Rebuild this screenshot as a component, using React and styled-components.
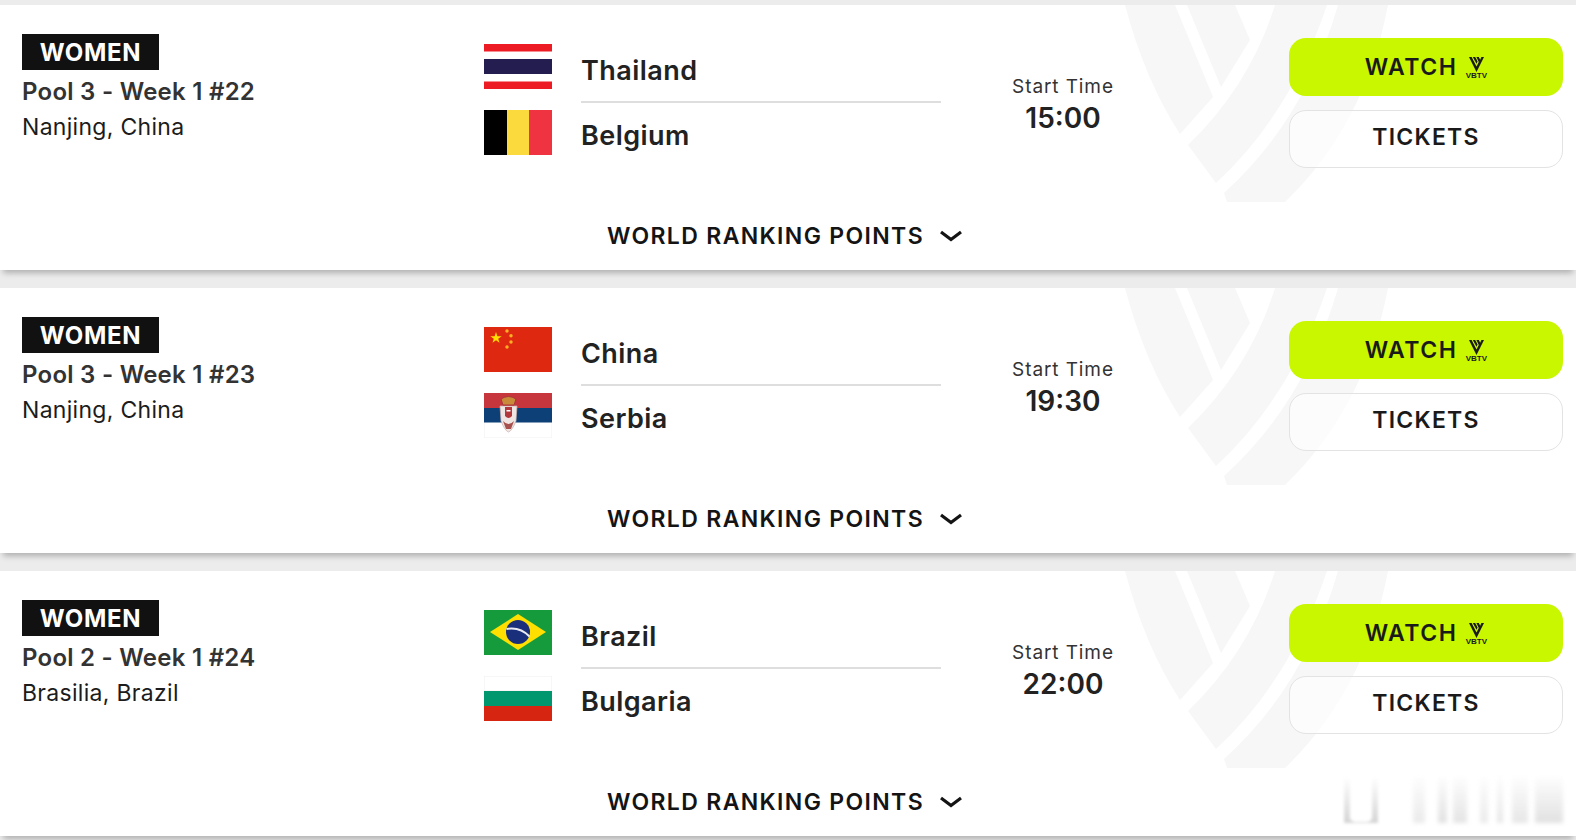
import React from 'react';
import styled, { createGlobalStyle } from 'styled-components';

const Global = createGlobalStyle`
  html, body { margin: 0; padding: 0; background: #ececec; }
  body { font-family: Inter, "Liberation Sans", sans-serif; height: 840px; overflow: hidden; }
`;

const Page = styled.main`
  position: relative;
  width: 1576px;
  height: 840px;
  overflow: hidden;
  padding-top: 5px;
  box-sizing: border-box;
  display: flex;
  flex-direction: column;
  gap: 18px;
`;

const Card = styled.article`
  position: relative;
  height: 265px;
  flex: none;
  background: #fff;
  box-shadow: 0 6px 6px -3px rgba(0, 0, 0, 0.26);
  box-sizing: border-box;
  padding: 29px 13px 0 22px;
`;

const Watermark = styled.svg`
  position: absolute;
  left: 1100px;
  top: -5px;
  width: 300px;
  height: 210px;
  fill: #f7f7f7;
`;

const Row = styled.div`
  position: relative;
  display: grid;
  grid-template-columns: 462px 457px 244px 1fr;
  height: 140px;
`;

const Info = styled.div`
  display: flex;
  flex-direction: column;
  align-items: flex-start;
`;

const Badge = styled.span`
  width: 137px;
  height: 36px;
  background: #111;
  color: #fff;
  font-size: 24px;
  font-weight: 700;
  letter-spacing: 0.7px;
  display: flex;
  align-items: center;
  justify-content: center;
`;

const Pool = styled.div`
  margin-top: 7px;
  font-size: 24px;
  line-height: 30px;
  font-weight: 600;
  color: #333;
  letter-spacing: 0.25px;
`;

const Venue = styled.div`
  margin-top: 5px;
  font-size: 23px;
  line-height: 30px;
  font-weight: 400;
  color: #1c1c1c;
  letter-spacing: 0.3px;
`;

const Teams = styled.div`
  display: flex;
  flex-direction: column;
  padding-top: 3px;
`;

const Team = styled.div`
  display: flex;
  align-items: center;
  height: 66px;
`;

const Flag = styled.svg`
  width: 68px;
  height: 45px;
  flex: none;
  margin-right: 29px;
  margin-bottom: 8px;
`;

const Name = styled.div`
  flex: 1;
  align-self: stretch;
  display: flex;
  align-items: center;
  font-size: 27px;
  font-weight: 600;
  color: #222;
  letter-spacing: 0.45px;
  padding: ${p => (p.$last ? '0 0 2px' : '2px 0 0')};
  border-bottom: ${p => (p.$last ? 'none' : '2px solid #dedede')};
`;

const Time = styled.div`
  display: flex;
  flex-direction: column;
  align-items: center;
  padding-top: 41px;
`;

const TimeLabel = styled.div`
  font-size: 19px;
  line-height: 24px;
  color: #333;
  letter-spacing: 0.9px;
`;

const TimeValue = styled.div`
  font-size: 28px;
  line-height: 34px;
  font-weight: 600;
  color: #222;
  margin-top: 2px;
`;

const Buttons = styled.div`
  justify-self: end;
  width: 274px;
  display: flex;
  flex-direction: column;
  gap: 14px;
  padding-top: 4px;
`;

const Button = styled.button`
  height: 58px;
  box-sizing: border-box;
  border-radius: 17px;
  border: ${p => (p.$primary ? 'none' : '1.5px solid #e3e3e3')};
  background: ${p => (p.$primary ? '#c8f700' : 'rgba(255,255,255,0.6)')};
  color: #1a1a1a;
  font-family: inherit;
  font-size: 23px;
  font-weight: 600;
  letter-spacing: ${p => (p.$primary ? '1.5px' : '1.25px')};
  display: flex;
  align-items: center;
  justify-content: center;
  gap: 8px;
  padding: ${p => (p.$primary ? '0' : '0 0 4px')};
`;

const VbtvMark = styled.span`
  display: flex;
  flex-direction: column;
  align-items: center;
  width: 22px;
  margin-top: 2px;
`;

const VbtvText = styled.span`
  font-size: 8px;
  line-height: 7px;
  font-weight: 800;
  letter-spacing: 0;
  font-family: "Liberation Sans", sans-serif;
`;

const Ranking = styled.div`
  position: relative;
  display: flex;
  align-items: center;
  justify-content: center;
  gap: 16px;
  margin-top: 47px;
  padding-right: 16px;
  height: 30px;
  font-size: 23px;
  font-weight: 600;
  letter-spacing: 1.35px;
  color: #141414;
`;

const Smudge = styled.div`
  position: absolute;
  left: 0;
  top: 777px;
  width: 1576px;
  height: 46px;
  display: flex;
`;

const SmudgeBar = styled.i`
  display: block;
  flex: none;
  margin-left: ${p => p.$gap}px;
  width: ${p => p.$w}px;
  height: 100%;
  filter: blur(2px);
  background: linear-gradient(to bottom, rgba(225, 225, 225, 0.05), rgba(${p => p.$c}, ${p => p.$c}, ${p => p.$c}, 0.9));
`;

const Phone = styled.i`
  display: flex;
  justify-content: center;
  align-items: flex-end;
  flex: none;
  margin-left: 1344px;
  width: 34px;
  height: 46px;
  filter: blur(1.5px);
  background: linear-gradient(to bottom, rgba(215, 215, 215, 0), rgba(205, 205, 205, 0.85));
`;

const PhoneBody = styled.b`
  display: block;
  width: 22px;
  height: 46px;
  background: #fff;
  border-radius: 0 0 5px 5px;
  margin-bottom: 1px;
`;

const Mark = () => (
  <Watermark viewBox="0 0 300 210">
    <path d="M25 5 H75 L113 97 L80 134 Q45 80 25 5 Z" />
    <path d="M87 5 H135 L150 40 L121 87 Z" />
    <path d="M175 5 H227 Q190 115 116 183 L88 145 Q150 85 175 5 Z" />
    <path d="M238 5 H288 Q265 125 185 202 H127 L124 193 Q205 120 238 5 Z" />
  </Watermark>
);

const Vbtv = () => (
  <VbtvMark>
    <svg width="15" height="15" viewBox="0 0 15 15" fill="#1a1a1a">
      <path d="M0 0 H2.600 L7.500 9.500 L9.800 5 L7.400 0 H9.800 L11.200 2.800 L12.400 0 H15 L7.500 15 Z" />
      <path d="M3.800 0 H6.200 L8.600 4.600 L7.500 6.800 Z" />
    </svg>
    <VbtvText>VBTV</VbtvText>
  </VbtvMark>
);

const Chevron = () => (
  <svg width="22" height="12" viewBox="0 0 22 12" fill="none" stroke="#141414" strokeWidth="3.2">
    <path d="M1 2 L11 9.5 L21 2" />
  </svg>
);

const Thailand = () => (
  <Flag viewBox="0 0 68 45">
    <rect width="68" height="45" fill="#fff" />
    <rect width="68" height="7.500" fill="#ed1c24" />
    <rect y="15" width="68" height="15" fill="#241d4f" />
    <rect y="37.500" width="68" height="7.500" fill="#ed1c24" />
  </Flag>
);
const Belgium = () => (
  <Flag viewBox="0 0 68 45">
    <rect width="23" height="45" fill="#000" />
    <rect x="23" width="22" height="45" fill="#fada3d" />
    <rect x="45" width="23" height="45" fill="#ef3340" />
  </Flag>
);
const China = () => (
  <Flag viewBox="0 0 68 45">
    <rect width="68" height="45" fill="#de2910" />
    <path d="M12 5 L13.350 9.140 L17.700 9.150 L14.190 11.710 L15.530 15.850 L12 13.300 L8.470 15.850 L9.810 11.710 L6.300 9.150 L10.650 9.140 Z" fill="#ffde00" />
    <circle cx="23" cy="4" r="1.700" fill="#fdb022" />
    <circle cx="27" cy="8.700" r="1.700" fill="#fdb022" />
    <circle cx="27" cy="15" r="1.700" fill="#fdb022" />
    <circle cx="23" cy="20" r="1.700" fill="#fdb022" />
  </Flag>
);
const Serbia = () => (
  <Flag viewBox="0 0 68 45">
    <rect width="68" height="45" fill="#fff" stroke="#f0f0f0" />
    <rect width="68" height="15" fill="#c6363c" />
    <rect y="15" width="68" height="14.500" fill="#0c4076" />
    <path d="M16 13 H33 L32 28 Q28 38 24.500 39 Q21 38 17 28 Z" fill="#efe6e4" stroke="#c9b0ac" strokeWidth="0.7" />
    <path d="M17 6 Q24.500 1 32 6 L30 12 H19 Z" fill="#c98a3a" stroke="#a8383a" strokeWidth="1" />
    <path d="M21 14 H28 V23 Q24.500 27 21 23 Z" fill="#b2383c" />
    <path d="M22.500 17 H26.500 V18.500 H22.500 Z" fill="#fff" />
    <path d="M19 28 Q24.500 34 30 28 L27 36 H22 Z" fill="#a8504e" />
  </Flag>
);
const Brazil = () => (
  <Flag viewBox="0 0 68 45">
    <rect width="68" height="45" fill="#169b3c" />
    <path d="M34 4 L62 22 L34 40 L6 22 Z" fill="#fedf00" />
    <circle cx="34" cy="22" r="12" fill="#1a2f7c" />
    <path d="M22.500 19 Q36 16.500 45.500 26.500" stroke="#e8eaf0" strokeWidth="2" fill="none" />
  </Flag>
);
const Bulgaria = () => (
  <Flag viewBox="0 0 68 45">
    <rect width="68" height="15" fill="#fff" stroke="#efefef" />
    <rect y="15" width="68" height="15" fill="#00966e" />
    <rect y="30" width="68" height="15" fill="#d62612" />
  </Flag>
);

const matches = [
  { pool: 'Pool 3 - Week 1 #22', venue: 'Nanjing, China', a: 'Thailand', A: Thailand, b: 'Belgium', B: Belgium, time: '15:00' },
  { pool: 'Pool 3 - Week 1 #23', venue: 'Nanjing, China', a: 'China', A: China, b: 'Serbia', B: Serbia, time: '19:30' },
  { pool: 'Pool 2 - Week 1 #24', venue: 'Brasilia, Brazil', a: 'Brazil', A: Brazil, b: 'Bulgaria', B: Bulgaria, time: '22:00' },
];

export default function App() {
  return (
    <Page>
      <Global />
      {matches.map(m => (
        <Card key={m.pool}>
          <Mark />
          <Row>
            <Info>
              <Badge>WOMEN</Badge>
              <Pool>{m.pool}</Pool>
              <Venue>{m.venue}</Venue>
            </Info>
            <Teams>
              <Team><m.A /><Name>{m.a}</Name></Team>
              <Team><m.B /><Name $last>{m.b}</Name></Team>
            </Teams>
            <Time>
              <TimeLabel>Start Time</TimeLabel>
              <TimeValue>{m.time}</TimeValue>
            </Time>
            <Buttons>
              <Button $primary>WATCH <Vbtv /></Button>
              <Button>TICKETS</Button>
            </Buttons>
          </Row>
          <Ranking>WORLD RANKING POINTS <Chevron /></Ranking>
        </Card>
      ))}
      <Smudge>
        <Phone><PhoneBody /></Phone>
        <SmudgeBar $gap={35} $w={12} $c={232} />
        <SmudgeBar $gap={13} $w={9} $c={222} />
        <SmudgeBar $gap={6} $w={14} $c={225} />
        <SmudgeBar $gap={13} $w={8} $c={232} />
        <SmudgeBar $gap={9} $w={6} $c={228} />
        <SmudgeBar $gap={9} $w={16} $c={228} />
        <SmudgeBar $gap={7} $w={28} $c={222} />
      </Smudge>
    </Page>
  );
}
